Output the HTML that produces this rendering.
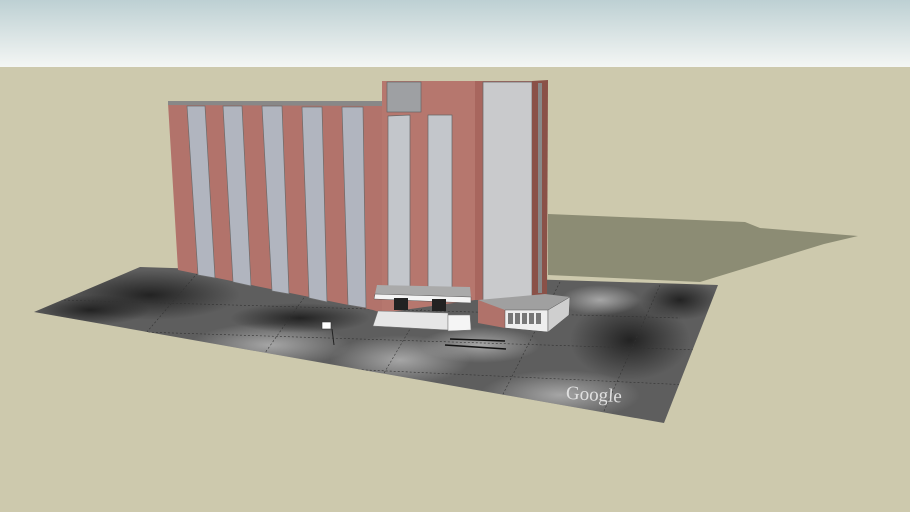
<!DOCTYPE html>
<html><head><meta charset="utf-8"><style>
html,body{margin:0;padding:0;width:910px;height:512px;overflow:hidden;background:#cdc9ad}
</style></head><body>
<svg width="910" height="512" viewBox="0 0 910 512" xmlns="http://www.w3.org/2000/svg">
<defs>
<linearGradient id="sky" x1="0" y1="0" x2="0" y2="1"><stop offset="0" stop-color="#bdd0d3"/><stop offset="1" stop-color="#f4f6f4"/></linearGradient>
<radialGradient id="b1" cx=".5" cy=".5" r=".5"><stop offset="0" stop-color="#1c1c1c" stop-opacity=".9"/><stop offset="1" stop-color="#1c1c1c" stop-opacity="0"/></radialGradient>
<radialGradient id="b2" cx=".5" cy=".5" r=".5"><stop offset="0" stop-color="#c4c4c4" stop-opacity=".7"/><stop offset="1" stop-color="#c4c4c4" stop-opacity="0"/></radialGradient>
<clipPath id="gc"><polygon points="34,312 140,267 718,285 664,423"/></clipPath>
</defs>
<rect x="0" y="0" width="910" height="67" fill="url(#sky)"/>
<rect x="0" y="67" width="910" height="445" fill="#cdc9ad"/>
<polygon points="548,214 745,222 760,228 858,236 824,244 700,282 548,275" fill="#8c8c74"/>
<polygon points="34,312 140,267 718,285 664,423" fill="#5e5e5e"/>
<g clip-path="url(#gc)">
<ellipse cx="150" cy="295" rx="90" ry="25" fill="url(#b1)"/>
<ellipse cx="90" cy="310" rx="60" ry="15" fill="url(#b1)"/>
<ellipse cx="270" cy="345" rx="80" ry="22" fill="url(#b2)"/>
<ellipse cx="400" cy="360" rx="70" ry="25" fill="url(#b2)"/>
<ellipse cx="560" cy="395" rx="80" ry="25" fill="url(#b2)"/>
<ellipse cx="630" cy="340" rx="60" ry="40" fill="url(#b1)"/>
<ellipse cx="680" cy="300" rx="40" ry="20" fill="url(#b1)"/>
<ellipse cx="300" cy="318" rx="70" ry="15" fill="url(#b1)"/>
<ellipse cx="480" cy="345" rx="60" ry="18" fill="url(#b2)"/>
<ellipse cx="600" cy="300" rx="40" ry="15" fill="url(#b2)"/>
<g stroke="#333" stroke-width=".6" stroke-dasharray="2 2" fill="none">
<line x1="60" y1="300" x2="680" y2="318"/><line x1="80" y1="330" x2="700" y2="350"/><line x1="150" y1="360" x2="690" y2="385"/>
<line x1="200" y1="270" x2="140" y2="340"/><line x1="320" y1="275" x2="260" y2="360"/><line x1="440" y1="278" x2="380" y2="380"/><line x1="560" y1="282" x2="500" y2="400"/><line x1="660" y1="285" x2="600" y2="420"/>
</g>
</g>
<text x="566" y="401" font-family="Liberation Serif, serif" font-size="19" fill="#e0e0e0" transform="rotate(4 600 395)">Google</text>
<rect x="322" y="322" width="9" height="7" fill="#fff" stroke="#333" stroke-width=".6"/><line x1="332" y1="329" x2="334" y2="345" stroke="#222"/>
<g stroke="#111" stroke-width="1.5"><line x1="450" y1="339" x2="505" y2="341"/><line x1="445" y1="345" x2="506" y2="349"/></g>
<polygon points="168,103 382,103 382,313 373,310 178,270" fill="#b2736b"/>
<polygon points="168,101 382,101 382,106 168,105" fill="#888"/>
<g fill="#b1b5bf" stroke="#6b6b6b" stroke-width=".7">
<polygon points="187,106 205,106 215,278 198,275"/>
<polygon points="223,106 242,106 251,286 233,282"/>
<polygon points="262,106 282,106 289,294 272,291"/>
<polygon points="302,107 322,107 327,302 309,298"/>
<polygon points="342,107 363,107 366,308 348,305"/>
</g>
<polygon points="382,81 475,81 475,300 382,313" fill="#b6776e"/>
<rect x="387" y="82" width="34" height="30" fill="#9ea0a3" stroke="#666" stroke-width=".7"/>
<polygon points="388,116 410,115 410,290 388,292" fill="#c3c6cb" stroke="#666" stroke-width=".7"/>
<polygon points="428,115 452,115 452,292 428,292" fill="#c3c6cb" stroke="#666" stroke-width=".7"/>
<polygon points="475,81 540,81 540,300 475,300" fill="#a8665e"/>
<polygon points="483,82 532,82 532,302 483,302" fill="#c9cacc" stroke="#666" stroke-width=".7"/>
<polygon points="532,81 548,80 547,297 532,302" fill="#8a5148"/>
<rect x="538" y="83" width="4" height="210" fill="#888"/>
<polygon points="377,285 470,287 471,297 375,294" fill="#aaa"/>
<polygon points="375,294 471,297 471,303 374,299" fill="#f4f4f4" stroke="#555" stroke-width=".5"/>
<rect x="394" y="298" width="14" height="12" fill="#222"/><rect x="432" y="299" width="14" height="12" fill="#222"/>
<polygon points="378,311 448,313 448,330 373,326" fill="#e6e6e6" stroke="#777" stroke-width=".5"/>
<polygon points="448,315 470,315 471,330 448,331" fill="#f5f5f5" stroke="#777" stroke-width=".5"/>
<polygon points="478,300 545,294 570,297 560,310 505,311" fill="#a0a0a0"/>
<polygon points="478,300 505,310 505,328 478,323" fill="#b0726a"/>
<polygon points="505,310 548,310 548,332 505,328" fill="#eee" stroke="#555" stroke-width=".5"/>
<polygon points="548,310 570,297 569,315 548,332" fill="#cfcfcf" stroke="#555" stroke-width=".5"/>
<g fill="#777"><rect x="508" y="313" width="5" height="11"/><rect x="515" y="313" width="5" height="11"/><rect x="522" y="313" width="5" height="11"/><rect x="529" y="313" width="5" height="11"/><rect x="536" y="313" width="5" height="11"/></g>
</svg>
</body></html>
